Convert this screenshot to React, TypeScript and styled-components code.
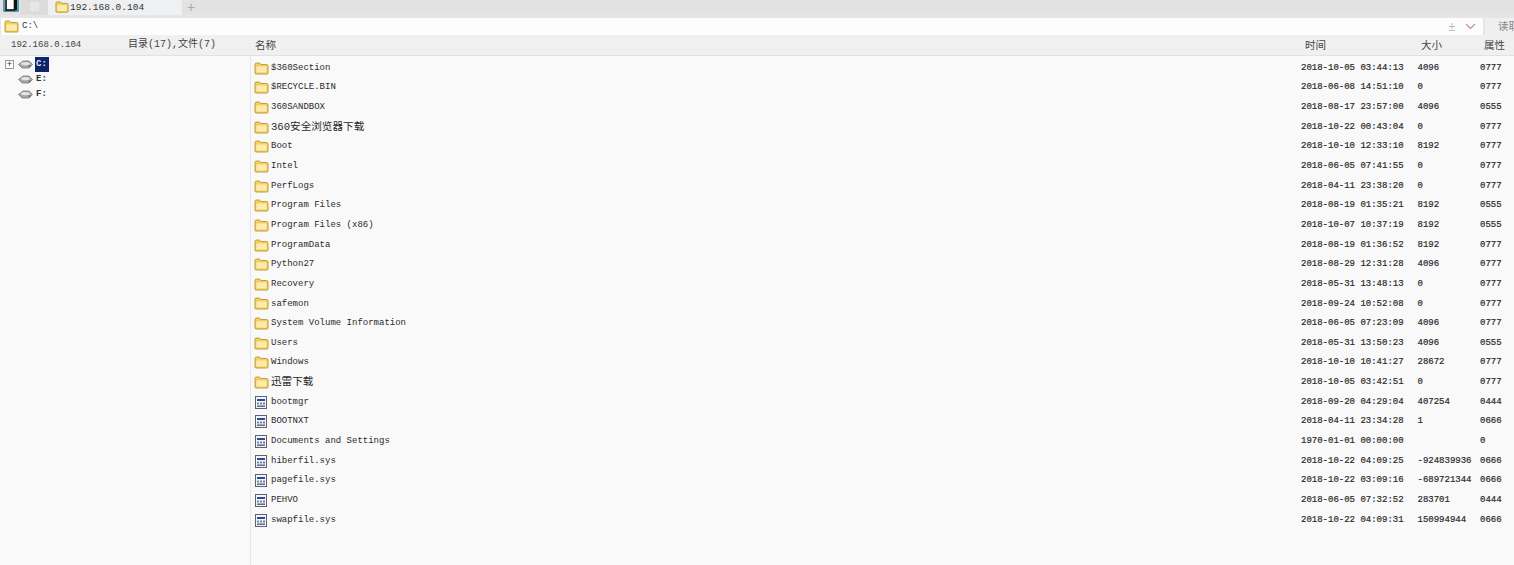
import React from "react";
import styled, { createGlobalStyle } from "styled-components";

const GlobalStyle = createGlobalStyle`
  html, body {
    margin: 0;
    padding: 0;
    background: #f9f9fa;
    overflow: hidden;
  }
`;

const FONT = `"Liberation Mono", "Noto Sans CJK SC", monospace`;
const UI_FONT = `"Liberation Sans", "Noto Sans CJK SC", sans-serif`;

interface Entry {
  name: string;
  time: string;
  size: string;
  attr: string;
  isFile?: boolean;
}

const entries: Entry[] = [
  { name: "$360Section", time: "2018-10-05 03:44:13", size: "4096", attr: "0777" },
  { name: "$RECYCLE.BIN", time: "2018-06-08 14:51:10", size: "0", attr: "0777" },
  { name: "360SANDBOX", time: "2018-08-17 23:57:00", size: "4096", attr: "0555" },
  { name: "360安全浏览器下载", time: "2018-10-22 00:43:04", size: "0", attr: "0777" },
  { name: "Boot", time: "2018-10-10 12:33:10", size: "8192", attr: "0777" },
  { name: "Intel", time: "2018-06-05 07:41:55", size: "0", attr: "0777" },
  { name: "PerfLogs", time: "2018-04-11 23:38:20", size: "0", attr: "0777" },
  { name: "Program Files", time: "2018-08-19 01:35:21", size: "8192", attr: "0555" },
  { name: "Program Files (x86)", time: "2018-10-07 10:37:19", size: "8192", attr: "0555" },
  { name: "ProgramData", time: "2018-08-19 01:36:52", size: "8192", attr: "0777" },
  { name: "Python27", time: "2018-08-29 12:31:28", size: "4096", attr: "0777" },
  { name: "Recovery", time: "2018-05-31 13:48:13", size: "0", attr: "0777" },
  { name: "safemon", time: "2018-09-24 10:52:08", size: "0", attr: "0777" },
  { name: "System Volume Information", time: "2018-06-05 07:23:09", size: "4096", attr: "0777" },
  { name: "Users", time: "2018-05-31 13:50:23", size: "4096", attr: "0555" },
  { name: "Windows", time: "2018-10-10 10:41:27", size: "28672", attr: "0777" },
  { name: "迅雷下载", time: "2018-10-05 03:42:51", size: "0", attr: "0777" },
  { name: "bootmgr", time: "2018-09-20 04:29:04", size: "407254", attr: "0444", isFile: true },
  { name: "BOOTNXT", time: "2018-04-11 23:34:28", size: "1", attr: "0666", isFile: true },
  { name: "Documents and Settings", time: "1970-01-01 00:00:00", size: "", attr: "0", isFile: true },
  { name: "hiberfil.sys", time: "2018-10-22 04:09:25", size: "-924839936", attr: "0666", isFile: true },
  { name: "pagefile.sys", time: "2018-10-22 03:09:16", size: "-689721344", attr: "0666", isFile: true },
  { name: "PEHVO", time: "2018-06-05 07:32:52", size: "283701", attr: "0444", isFile: true },
  { name: "swapfile.sys", time: "2018-10-22 04:09:31", size: "150994944", attr: "0666", isFile: true },
];

const Page = styled.div`
  width: 1514px;
  height: 565px;
  display: flex;
  flex-direction: column;
  overflow: hidden;
  background: #f9f9fa;
  color: #222;
`;

const TabBar = styled.div`
  height: 15px;
  flex-shrink: 0;
  display: flex;
  align-items: stretch;
  background: #e2e2e3;
  overflow: hidden;
`;

const MenuButton = styled.div`
  width: 21px;
  flex-shrink: 0;
  display: flex;
  justify-content: center;
`;

const HomeTab = styled.div`
  width: 28px;
  flex-shrink: 0;
  background: #dcdcdd;
  display: flex;
  justify-content: center;
  border-right: 1px solid #f0f0f0;
  box-sizing: border-box;
`;

const ActiveTab = styled.div`
  width: 133px;
  flex-shrink: 0;
  box-sizing: border-box;
  padding-left: 6px;
  background: #eef0f1;
  display: flex;
  align-items: center;
  gap: 1px;
  font: 9.5px/1 ${FONT};
  color: #333;
`;

const AddTab = styled.div`
  width: 16px;
  margin-left: 1px;
  text-align: center;
  font: 14px/14px ${UI_FONT};
  color: #a9a9ab;
`;

const AddressRow = styled.div`
  height: 20px;
  flex-shrink: 0;
  box-sizing: border-box;
  padding-top: 3px;
  display: flex;
  background: #e6e6e7;
`;

const AddressBox = styled.div`
  width: 1482px;
  flex-shrink: 0;
  margin-left: 1px;
  background: #fdfdfd;
  display: flex;
  align-items: center;
  padding: 0 7px 0 3px;
  box-sizing: border-box;
  font: 9px/1 ${FONT};
  color: #333;
  gap: 3px;
`;

const AddressPath = styled.span`
  flex: 1;
`;

const AddressAction = styled.span`
  font: 12px/1 ${UI_FONT};
  color: #bbb;
  margin-right: 7px;
`;

const ReadButton = styled.div`
  flex: 1;
  margin-left: 2px;
  padding-left: 13px;
  background: #efeff0;
  font: 10.5px/15px "Noto Sans CJK SC", sans-serif;
  color: #888;
  white-space: nowrap;
  overflow: hidden;
`;

const Main = styled.div`
  flex: 1;
  min-height: 0;
  display: grid;
  grid-template-columns: 250px 1fr;
  grid-template-rows: 21px 1fr;
`;

const SideHeader = styled.div`
  display: flex;
  align-items: center;
  padding-left: 11px;
  background: #f0f0f1;
  border-bottom: 1px solid #e2e2e3;
  font: 9px/1 ${FONT};
  color: #444;
`;

const HostLabel = styled.span`
  width: 117px;
`;

const CountLabel = styled.span`
  font-size: 10px;
`;

const HeaderRow = styled.div`
  display: grid;
  grid-template-columns: 1050px 116px 63px 1fr;
  align-items: center;
  padding-left: 5px;
  background: #f0f0f1;
  border-bottom: 1px solid #e2e2e3;
  font: 10.5px/1 "Noto Sans CJK SC", sans-serif;
  color: #444;
`;

const Tree = styled.div`
  padding-top: 1px;
  display: flex;
  flex-direction: column;
  font: bold 9px/15px ${FONT};
  color: #333;
`;

const TreeRow = styled.div`
  height: 15px;
  display: flex;
  align-items: center;
  padding-left: 5px;
`;

const ExpandBox = styled.span<{ $visible: boolean }>`
  width: 9px;
  height: 9px;
  box-sizing: border-box;
  border: 1px solid ${(p) => (p.$visible ? "#999" : "transparent")};
  background: ${(p) => (p.$visible ? "#fff" : "transparent")};
  display: flex;
  align-items: center;
  justify-content: center;
  font: 9px/1 ${UI_FONT};
  color: #333;
  margin-right: 4px;
`;

const DriveLabel = styled.span<{ $selected: boolean }>`
  margin-left: 2px;
  padding: 0 2px 0 1px;
  color: ${(p) => (p.$selected ? "#e4e8f4" : "#333")};
  background: ${(p) => (p.$selected ? "#0c2468" : "transparent")};
`;

const FileList = styled.div`
  border-left: 1px solid #e6e6e7;
  padding-top: 2.5px;
  overflow: hidden;
`;

const Row = styled.div`
  height: 19.65px;
  display: grid;
  grid-template-columns: 17px 1030px 116.5px 62.5px 1fr;
  align-items: center;
  padding-left: 3px;
  font: 9px/1 ${FONT};
  color: #2a2a2a;
  -webkit-text-stroke: 0.2px #2a2a2a;
`;

const Cell = styled.span`
  white-space: pre;
`;

const NameCell = styled(Cell)<{ $cjk: boolean }>`
  font-size: ${(p) => (p.$cjk ? "10.6px" : "9px")};
  -webkit-text-stroke: 0;
`;

const FolderIcon: React.FC<{ size?: number }> = ({ size = 15 }) => (
  <svg width={size} height={size * 0.87} viewBox="0 0 15 13">
    <path
      d="M1 2.5 Q1 1 2.5 1 H5.5 L7 2.5 H12.5 Q14 2.5 14 4 V11 Q14 12 13 12 H2 Q1 12 1 11 Z"
      fill="#f6cf63"
      stroke="#b8932f"
      strokeWidth="0.9"
    />
    <rect x="2.4" y="4.6" width="10.2" height="6" rx="0.6" fill="#fdecae" />
  </svg>
);

const FileIcon: React.FC = () => (
  <svg width="14" height="15" viewBox="0 0 14 15">
    <rect x="1.5" y="1.5" width="11" height="12" fill="#f4f5f8" stroke="#5b6275" />
    <rect x="3" y="4" width="8" height="2" fill="#2c4a9c" />
    <rect x="3" y="7.5" width="2" height="2" fill="#44a0c0" />
    <rect x="6" y="7.5" width="2" height="2" fill="#c26a5a" />
    <rect x="9" y="7.5" width="2" height="2" fill="#5a7ac2" />
    <rect x="3" y="10.5" width="8" height="1.4" fill="#555f78" />
  </svg>
);

const DriveIcon: React.FC = () => (
  <svg width="15" height="9" viewBox="0 0 15 9">
    <path d="M0.5 4.5 L5 1 H11 L14.5 4.5 L11 8 H4 Z" fill="#a9a9ab" stroke="#6c6c6e" strokeWidth="0.7" />
    <ellipse cx="7.5" cy="3.6" rx="4.4" ry="1.7" fill="#e5e5e6" />
    <rect x="10.5" y="5.6" width="2" height="1" fill="#4a4a4c" />
  </svg>
);

const LogoIcon: React.FC = () => (
  <svg width="16" height="15" viewBox="0 0 16 15">
    <path d="M1 -2 H15 V11 H1 Z" fill="#fdfdfd" stroke="#1c7f9a" strokeWidth="1.4" />
    <rect x="3" y="-1" width="8.5" height="11" fill="#fff" stroke="#111" strokeWidth="1.6" />
    <rect x="11.5" y="-1" width="2.5" height="11" fill="#111" />
  </svg>
);

const GhostIcon: React.FC = () => (
  <svg width="13" height="15" viewBox="0 0 13 15">
    <rect x="1" y="1" width="11" height="11" fill="#e6e6e6" stroke="#cfcfcf" strokeDasharray="1.5 1" />
  </svg>
);

const ChevronIcon: React.FC = () => (
  <svg width="11" height="7" viewBox="0 0 11 7">
    <path d="M1 1 L5.5 5.5 L10 1" fill="none" stroke="#c9897c" strokeWidth="1.1" />
  </svg>
);

const App: React.FC = () => (
  <Page>
    <GlobalStyle />
    <TabBar>
      <MenuButton>
        <LogoIcon />
      </MenuButton>
      <HomeTab>
        <GhostIcon />
      </HomeTab>
      <ActiveTab>
        <FolderIcon size={14} />
        192.168.0.104
      </ActiveTab>
      <AddTab>+</AddTab>
    </TabBar>
    <AddressRow>
      <AddressBox>
        <FolderIcon />
        <AddressPath>C:\</AddressPath>
        <AddressAction>±</AddressAction>
        <ChevronIcon />
      </AddressBox>
      <ReadButton>读取</ReadButton>
    </AddressRow>
    <Main>
      <SideHeader>
        <HostLabel>192.168.0.104</HostLabel>
        <CountLabel>目录(17),文件(7)</CountLabel>
      </SideHeader>
      <HeaderRow>
        <span>名称</span>
        <span>时间</span>
        <span>大小</span>
        <span>属性</span>
      </HeaderRow>
      <Tree>
        {["C:", "E:", "F:"].map((drive, i) => (
          <TreeRow key={drive}>
            <ExpandBox $visible={i === 0}>{i === 0 ? "+" : ""}</ExpandBox>
            <DriveIcon />
            <DriveLabel $selected={i === 0}>{drive}</DriveLabel>
          </TreeRow>
        ))}
      </Tree>
      <FileList>
        {entries.map((entry) => (
          <Row key={entry.name}>
            {entry.isFile ? <FileIcon /> : <FolderIcon />}
            <NameCell $cjk={/[^\x00-\x7f]/.test(entry.name)}>{entry.name}</NameCell>
            <Cell>{entry.time}</Cell>
            <Cell>{entry.size}</Cell>
            <Cell>{entry.attr}</Cell>
          </Row>
        ))}
      </FileList>
    </Main>
  </Page>
);

export default App;
